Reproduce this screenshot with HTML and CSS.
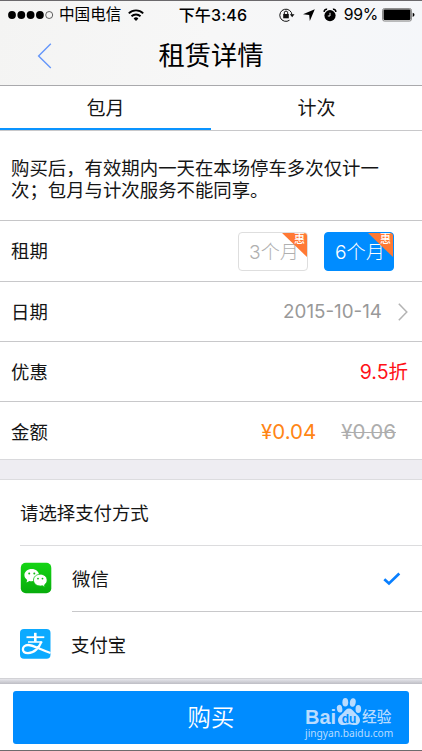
FILE: index.html
```html
<!DOCTYPE html>
<html lang="zh-CN">
<head>
<meta charset="utf-8">
<title>租赁详情</title>
<link rel="stylesheet" href="styles.css">
</head>
<body>
<div class="screen">
  <header class="header">
    <div class="status">
      <div class="status-left">
        <svg class="signal" width="46" height="10" viewBox="0 0 46 10">
          <circle cx="4" cy="5" r="3.9"/><circle cx="13.3" cy="5" r="3.9"/><circle cx="22.6" cy="5" r="3.9"/><circle cx="31.9" cy="5" r="3.9"/>
          <circle cx="41.2" cy="5" r="3.5" fill="none" stroke="#222" stroke-width=".7"/>
        </svg>
        <span class="carrier">中国电信</span>
        <svg class="wifi" width="16" height="12" viewBox="0 0 16 12" fill="none" stroke="#000" stroke-width="1.9">
          <path d="M.8 4.4a10.2 10.2 0 0 1 14.4 0"/><path d="M3.5 7.3a6.4 6.4 0 0 1 9 0"/><path d="M8 11.9 5.6 9.4a3.5 3.5 0 0 1 4.8 0z" fill="#000" stroke="none"/>
        </svg>
      </div>
      <span class="clock">下午3:46</span>
      <div class="status-right">
        <svg class="lock" width="16" height="14" viewBox="0 0 16 14" fill="none" stroke="#111">
          <path d="M10.5 12.2A6.1 6.1 0 1 1 13 7" stroke-width="1"/><path d="M10.8 6.3h4.7l-2.3 3z" fill="#111" stroke="none"/>
          <rect x="4.2" y="6" width="5.6" height="4.3" fill="#111" stroke="none"/><path d="M5.3 6.2V4.8a1.7 1.7 0 0 1 3.4 0v1.4" stroke-width="1"/>
        </svg>
        <svg class="arrow" width="12" height="12" viewBox="0 0 12 12"><path d="M11.8.2 6.8 12 6.2 5.9 0 5.3z"/></svg>
        <svg class="alarm" width="14" height="14" viewBox="0 0 14 14">
          <circle cx="7" cy="7.6" r="5.6"/><path d="M1.200 4A2.400 2.400 0 0 1 4.100 1.300M12.800 4A2.400 2.400 0 0 0 9.900 1.300" fill="none" stroke="#000" stroke-width="1.500"/>
          <path d="M7 4.800v3.200H4.800" fill="none" stroke="#fff" stroke-width=".9"/>
        </svg>
        <span class="percent">99%</span>
        <svg class="battery" width="33" height="14" viewBox="0 0 33 14">
          <rect x=".5" y=".5" width="29" height="12.6" rx="2" fill="#ddd" stroke="#777" stroke-width=".8"/><rect x="1.6" y="1.5" width="26.8" height="10.6" rx="1"/>
          <path d="M30.7 4.7q1.8.5 1.8 2.1t-1.8 2.1z"/>
        </svg>
      </div>
    </div>
    <div class="nav">
      <svg class="back" width="15" height="26" viewBox="0 0 15 26"><path d="M13.8.8 1.6 13l12.2 12" fill="none" stroke="#6496fa" stroke-width="1.4"/></svg>
      <h1>租赁详情</h1>
      <span></span>
    </div>
  </header>

  <nav class="tabs">
    <div class="tab active">包月</div>
    <div class="tab">计次</div>
  </nav>

  <p class="notice">购买后，有效期内一天在本场停车多次仅计一次；包月与计次服务不能同享。</p>

  <section class="details">
    <div class="row term">
      <span>租期</span>
      <div class="options">
        <div class="option">3个月<i class="corner"></i><b class="deal">惠</b></div>
        <div class="option selected">6个月<i class="corner"></i><b class="deal">惠</b></div>
      </div>
    </div>
    <div class="row date">
      <span>日期</span>
      <div class="date-value"><span>2015-10-14</span>
        <svg width="10" height="18" viewBox="0 0 10 18"><path d="m.8.8 8 8.2-8 8.2" fill="none" stroke="#b3b3b3" stroke-width="1.5"/></svg>
      </div>
    </div>
    <div class="row discount"><span>优惠</span><span class="off">9.5折</span></div>
    <div class="row amount">
      <span>金额</span>
      <div class="prices"><span class="price">¥0.04</span><s>¥0.06</s></div>
    </div>
  </section>

  <div class="gap"></div>

  <section class="payment">
    <div class="pay-title">请选择支付方式</div>
    <div class="pay-row">
      <svg class="pay-icon wechat" width="32" height="32" viewBox="0 0 32 32">
        <defs><linearGradient id="green" x2="0" y2="1"><stop stop-color="#15d515"/><stop offset="1" stop-color="#07ac0c"/></linearGradient></defs>
        <rect x=".8" y=".8" width="30.5" height="30.5" rx="5" fill="url(#green)"/>
        <path d="M11.7 7C7.6 7 4.4 9.7 4.4 13.1c0 2 1 3.7 2.8 4.8l-.7 2.5 2.9-1.5c.8.2 1.5.3 2.3.3 4.1 0 7.4-2.700 7.400-6.100S15.800 7 11.700 7z" fill="#fff"/>
        <path d="M20.300 12.200c-3.800 0-6.800 2.600-6.800 5.900s3 5.900 6.800 5.900c.8 0 1.500-.1 2.200-.3l2.500 1.400-.6-2.200c1.700-1.100 2.700-2.800 2.700-4.800 0-3.300-3-5.900-6.800-5.900z" fill="#fff" stroke="#0fc412" stroke-width=".8"/>
        <g fill="#10bd12"><circle cx="9.200" cy="11.400" r="1"/><circle cx="14.300" cy="11.400" r="1"/><circle cx="18" cy="16.600" r=".9"/><circle cx="22.500" cy="16.600" r=".9"/></g>
      </svg>
      <div class="pay-body"><span>微信</span>
        <svg class="check" width="18" height="14" viewBox="0 0 18 14"><path d="m1.300 7.200 4.700 4.300L16.300 1.500" fill="none" stroke="#087fff" stroke-width="2.700"/></svg>
      </div>
    </div>
    <div class="pay-row last">
      <svg class="pay-icon" width="32" height="32" viewBox="0 0 32 32">
        <rect x="0" y="1" width="30.500" height="29.800" rx="4" fill="#0caaff"/>
        <g fill="none" stroke="#fff"><path d="M6.500 9.200h17.800" stroke-width="1.800"/><path d="M15.300 4.800v9" stroke-width="2.600"/><path d="M8 14h14.200" stroke-width="1.500"/>
        <path d="M21.500 13.700c-2.200 5.800-7.400 11.400-13.500 11.400-3.200 0-5.100-1.500-5.100-3.900 0-2.200 2-4.200 5.200-4.200 4.900 0 10.500 3.900 22.400 8" stroke-width="2.300"/></g>
      </svg>
      <div class="pay-body"><span>支付宝</span></div>
    </div>
  </section>

  <div class="shade"></div>

  <footer class="footer">
    <div class="buy">购买
      <div class="watermark">
        <div class="brand"><span class="bai">Bai</span>
          <svg class="paw" width="26" height="29" viewBox="0 0 26 29" fill="#b9dcff">
            <ellipse cx="3.600" cy="11.700" rx="2.700" ry="3.900" transform="rotate(-12 3.600 11.700)"/><ellipse cx="9.300" cy="5.200" rx="2.900" ry="4.300"/><ellipse cx="16.800" cy="5.500" rx="2.900" ry="4.200" transform="rotate(10 16.800 5.500)"/><ellipse cx="22.300" cy="12" rx="2.800" ry="4"/>
            <path d="M13 11.500c-2.600 0-3.800 2.200-5.500 4C5.400 17.800 2 19.400 2 23.100c0 3 2.100 5 4.800 5 2.200 0 4-.8 6.200-.8s3.900.8 6.100.8c3 0 4.900-2.100 4.900-5 0-3.600-3.200-5.300-5.300-7.600-1.900-2.100-3.100-4-5.700-4z"/>
            <text class="du" x="5.700" y="25.500">du</text>
          </svg>
          <span class="jingyan">经验</span>
        </div>
        <div class="url">jingyan.baidu.com</div>
      </div>
    </div>
  </footer>
</div>
</body>
</html>
```
FILE: styles.css
```css
* { box-sizing: border-box; }
body { margin: 0; }
svg { display: block; flex: none; }
.screen {
  width: 422px; height: 751px; overflow: hidden;
  display: flex; flex-direction: column;
  background: #fff; color: #151515;
  font: 18.4px/22px Inter, "Noto Sans CJK SC", sans-serif;
  border-bottom: 1px solid #6c6c6e;
}
.screen > * { flex: none; }
.header {
  height: 86px; border-top: 1px solid #6b696c; border-bottom: 1px solid #a9a9ac;
  background: linear-gradient(100deg, #f4f4f3, #f7f7f7 50%, #f5f7fa); color: #000;
}
.status { height: 27px; display: grid; grid-template-columns: 1fr auto 1fr; align-items: center; padding: 0 7px 0 8px; }
.status-left, .status-right { display: flex; align-items: center; }
.status-right { justify-content: flex-end; }
.carrier { font-size: 15.6px; margin-left: 5px; padding-top: 1px; }
.wifi { margin-left: 7px; }
.clock { font-size: 16px; font-weight: 500; letter-spacing: .2px; padding-left: 3px; }
.arrow { margin-left: 8px; }
.alarm { margin-left: 8px; }
.percent { font-size: 15.8px; margin-left: 7px; letter-spacing: -.3px; }
.battery { margin-left: 4px; }
.nav { height: 57px; display: grid; grid-template-columns: 1fr auto 1fr; align-items: center; }
.back { margin: 0 0 1px 37px; }
h1 { margin: 0 0 2px; font-size: 26.3px; line-height: 37px; font-weight: 400; }
.tabs { display: flex; height: 45px; border-bottom: 1px solid #c8c8ca; }
.tab { width: 211px; text-align: center; font-size: 19px; line-height: 46px; }
.active { border-bottom: 2.5px solid #0a94ff; }
.notice { margin: 0; padding: 26px 30px 0 11px; height: 90px; border-bottom: 1px solid #c6c6c8; }
.row { display: flex; align-items: center; justify-content: space-between; padding-left: 11px; border-bottom: 1px solid #c8c8ca; }
.term { height: 61px; padding-right: 28px; }
.date { height: 60px; padding-right: 14px; }
.discount { height: 60px; padding-right: 14px; }
.amount { height: 58px; padding: 2px 26px 0 11px; border-color: #d9d9dc; }
.options { display: flex; gap: 16px; padding-top: 1px; }
.option {
  position: relative; width: 70px; height: 39px; border: 1px solid #dedede; border-radius: 4px;
  overflow: hidden; color: #b0b0b0; font-size: 19.2px; font-weight: 300; line-height: 38px; padding-left: 10px; white-space: nowrap;
}
.selected { background: #008cff; border-color: #008cff; color: #fff; }
.corner { position: absolute; top: -1px; right: -1px; width: 27px; height: 26px; background: #ff7934; clip-path: polygon(0 0, 100% 0, 100% 100%); }
.deal { position: absolute; top: 0; right: 2px; color: #fff; font-size: 11px; line-height: 13px; font-weight: 500; }
.date-value { display: flex; align-items: center; gap: 16px; color: #999; font-size: 18.8px; }
.off { color: #ff1117; font-size: 19.5px; }
.prices { display: flex; gap: 25px; font-size: 20.5px; }
.price { color: #ff8515; }
s { color: #adadad; text-decoration-thickness: 1px; }
.gap { height: 20px; background: #eeedf2; border-bottom: 1px solid #dcdcdf; }
.payment { padding-left: 20px; }
.pay-title { height: 66px; line-height: 66px; border-bottom: 1px solid #dcdcde; }
.pay-row { display: flex; align-items: center; height: 66px; }
.wechat { margin-top: -2px; }
.pay-body { margin-left: 20px; flex: 1; height: 66px; display: flex; align-items: center; justify-content: space-between; padding-right: 21px; border-bottom: 1px solid #c8c8ca; }
.last .pay-icon { margin-top: -2px; }
.last .pay-body { border: 0; margin-left: 19px; }
.shade { height: 6px; background: linear-gradient(#e6e6eb, #bdbdc4); border-top: 1px solid #d2d2d6; }
.footer { height: 66px; padding: 7px 13px 0; background: #fff; }
.buy { position: relative; height: 53px; border-radius: 3px; background: #008cff; color: #fff; font-size: 23.4px; font-weight: 350; line-height: 54px; text-align: center; }
.watermark { position: absolute; left: 292px; top: 7px; color: #b9dcff; text-align: left; }
.brand { display: flex; align-items: flex-end; height: 28px; }
.bai { font: bold 20px/22px "Liberation Sans", sans-serif; margin-bottom: -2px; width: 31px; }
.paw { margin-right: -1px; }
.du { font: bold 12px "Liberation Sans", sans-serif; fill: #008cff; }
.jingyan { font-size: 14.7px; line-height: 20px; font-weight: 500; margin: 0 0 -1px 1px; }
.url { font: 10.2px/14px "Noto Sans", sans-serif; white-space: nowrap; }
```
